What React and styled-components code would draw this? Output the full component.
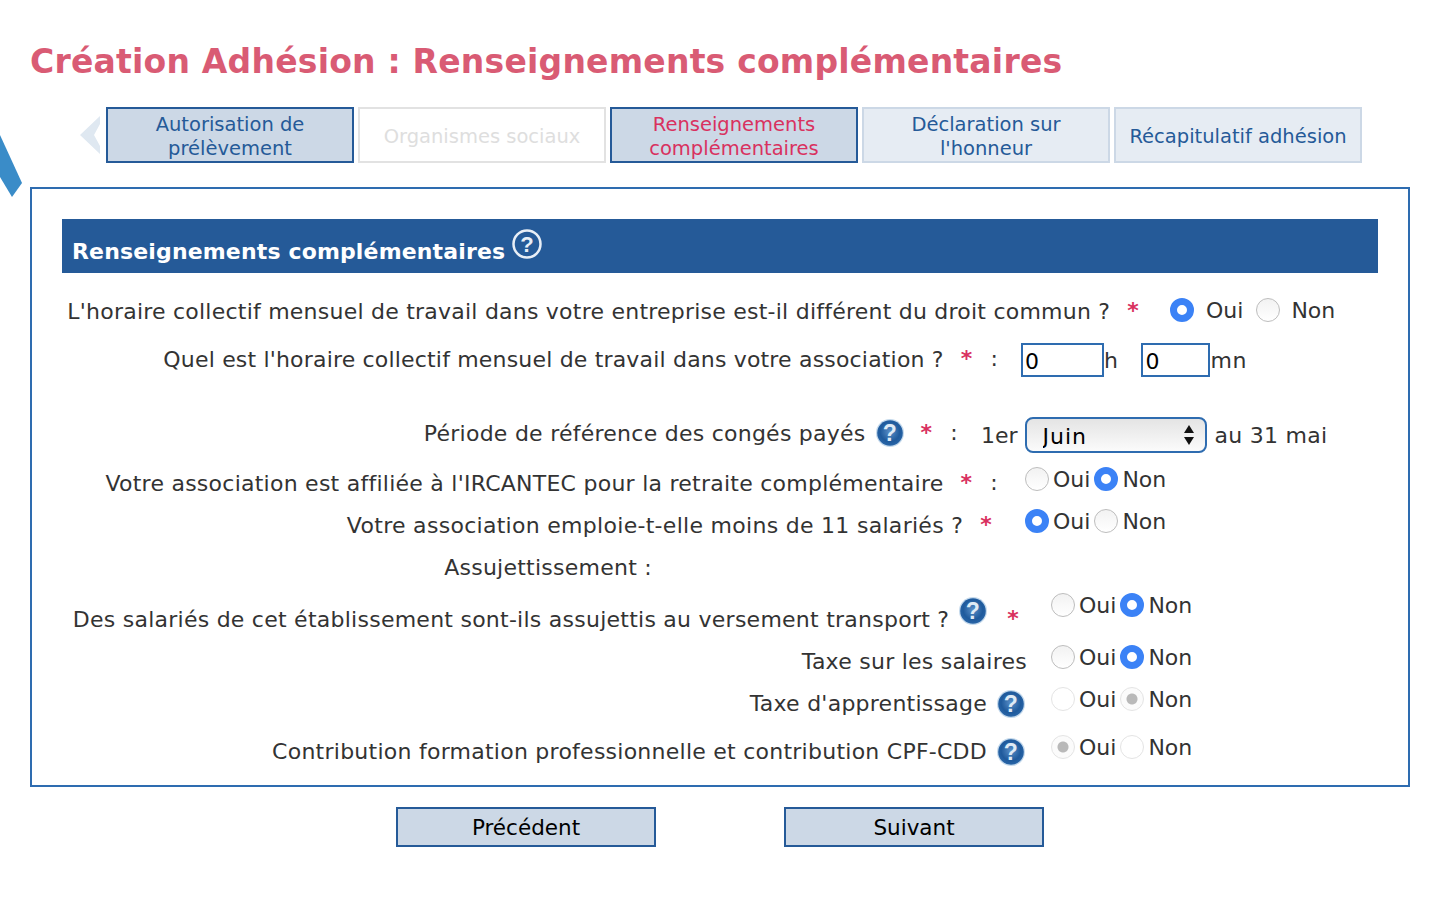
import React from "react";
import styled, { createGlobalStyle } from "styled-components";

const GlobalStyle = createGlobalStyle`
  html, body {
    margin: 0;
    background: #fff;
    color: #333;
    font-family: "DejaVu Sans", Verdana, sans-serif;
  }
`;

const Page = styled.div`
  position: relative;
  width: 1430px;
  height: 898px;
  padding: 42px 20px 0 30px;
  box-sizing: border-box;
  overflow: hidden;
`;

const Title = styled.h1`
  margin: 0;
  height: 40px;
  font-size: 33px;
  line-height: 40px;
  letter-spacing: 0.22px;
  font-weight: bold;
  color: #d95b74;
`;

const Ribbon = styled.svg`
  position: absolute;
  left: 0;
  top: 130px;
`;

const Steps = styled.nav`
  display: flex;
  align-items: center;
  gap: 4px;
  margin: 25px 0 24px 50px;
`;

const BackArrow = styled.svg`
  margin-right: 1px;
`;

const Step = styled.a`
  display: flex;
  align-items: center;
  justify-content: center;
  box-sizing: border-box;
  width: 248px;
  height: 56px;
  padding-top: 3px;
  border: 2px solid ${(p) => (p.$active ? "#255a98" : p.$disabled ? "#e2e2e2" : "#ccd8e6")};
  background: ${(p) => (p.$active ? "#ccd8e6" : p.$disabled ? "#fff" : "#e6ecf3")};
  color: ${(p) => (p.$current ? "#d9315f" : p.$disabled ? "#dedede" : "#255a98")};
  font-size: 19.5px;
  line-height: 24px;
  text-align: center;
`;

const Panel = styled.section`
  box-sizing: border-box;
  width: 1380px;
  height: 600px;
  border: 2px solid #2e6cb0;
  padding: 30px 30px 0;
`;

const SectionHeader = styled.h2`
  display: flex;
  align-items: flex-start;
  gap: 7px;
  box-sizing: border-box;
  height: 54px;
  margin: 0 0 16px;
  padding: 10px 0 0 10px;
  background: #255a98;
  color: #fff;
  font-size: 22px;
  line-height: 46px;
  letter-spacing: 0.15px;
  font-weight: bold;
`;

const Row = styled.div`
  display: grid;
  grid-template-columns: ${(p) => p.$labelEnd - 62}px auto;
  column-gap: ${(p) => p.$gap}px;
  align-items: center;
  height: 42px;
  margin-top: ${(p) => p.$top || 0}px;
  font-size: 22px;
`;

const Question = styled.div`
  display: flex;
  align-items: center;
  justify-content: flex-end;
  white-space: nowrap;
  letter-spacing: ${(p) => p.$spacing ?? 0.25}px;
  transform: translateY(${(p) => p.$shift ?? 1}px);
`;

const Star = styled.span`
  margin-left: ${(p) => p.$left || 17}px;
  color: #d9315f;
  font-weight: bold;
  transform: translateY(-1px);
`;

const Colon = styled.span`
  margin-left: 18px;
  transform: translateY(-1px);
`;

const Controls = styled.div`
  display: flex;
  align-items: center;
  white-space: nowrap;
  transform: translateY(${(p) => p.$shift || 0}px);
`;

const Radio = styled.input.attrs({ type: "radio" })`
  appearance: none;
  box-sizing: border-box;
  flex: none;
  width: 24px;
  height: 24px;
  margin: 0 ${(p) => p.$after || 4}px 0 0;
  border-radius: 50%;
  border: 1px solid #bdbdbd;
  background: linear-gradient(#f2f2f2, #fff);

  &:checked {
    border: 7px solid #3b82f6;
    background: #fff;
  }

  &:disabled {
    border: 1px solid #e4e4e4;
    background: #fff;
  }

  &:disabled:checked {
    border: 1px solid #e4e4e4;
    background: radial-gradient(circle, #b9b9b9 0 5px, #fbfbfb 6px);
  }
`;

const Choice = styled.span`
  margin-right: ${(p) => p.$after || 4}px;
  line-height: 24px;
  transform: translateY(1px);
`;

const TimeInput = styled.input`
  box-sizing: border-box;
  width: ${(p) => p.$width}px;
  height: 34px;
  padding: 2px 0 0 2px;
  border: 2px solid #2e6cb0;
  border-radius: 0;
  outline: none;
  color: #000;
  font: inherit;
`;

const Unit = styled.span`
  margin-right: ${(p) => p.$after || 0}px;
  letter-spacing: 0.5px;
`;

const SelectBox = styled.span`
  position: relative;
  display: inline-flex;
  margin: 0 8px 0 7px;
`;

const Select = styled.select`
  appearance: none;
  box-sizing: border-box;
  width: 182px;
  height: 36px;
  padding: 2px 0 0 16px;
  border: 2px solid #2e6cb0;
  border-radius: 8px;
  outline: none;
  background: linear-gradient(#e4e4e4, #fbfbfb);
  color: #000;
  font: inherit;
  letter-spacing: 1px;
`;

const SelectArrows = styled.svg`
  position: absolute;
  right: 12px;
  top: 6px;
  pointer-events: none;
`;

const Period = styled.span`
  letter-spacing: 0.25px;
`;

const Footer = styled.div`
  display: flex;
  gap: 128px;
  margin: 20px 0 0 366px;
`;

const NavButton = styled.button`
  box-sizing: border-box;
  width: 260px;
  height: 40px;
  border: 2px solid #255a98;
  background: #ccd8e6;
  color: #000;
  font: 21.5px "DejaVu Sans", Verdana, sans-serif;
`;

const HelpSvg = styled.svg`
  flex: none;
  margin-left: 10px;
  transform: translateY(${(p) => p.$shift || 0}px);
`;

const HelpOutline = styled.svg`
  flex: none;
`;

const Help = ({ shift, id }) => (
  <HelpSvg $shift={shift} width="28" height="28" viewBox="0 0 28 28" aria-label="Aide">
    <defs>
      <radialGradient id={id} cx="50%" cy="45%" r="55%">
        <stop offset="0%" stopColor="#5a8fc8" />
        <stop offset="70%" stopColor="#1f5a9c" />
        <stop offset="100%" stopColor="#2a66a8" />
      </radialGradient>
    </defs>
    <circle cx="14" cy="14" r="14" fill="#c4d9ec" />
    <circle cx="14" cy="14" r="12.8" fill={`url(#${id})`} />
    <text x="14" y="22" textAnchor="middle" fontSize="23" fontWeight="bold" fill="#dfeaf5" fontFamily="Liberation Sans, sans-serif">?</text>
  </HelpSvg>
);

const YesNo = ({ name, value, disabled }) => (
  <>
    <Radio name={name} defaultChecked={value === "oui"} disabled={disabled} />
    <Choice>Oui</Choice>
    <Radio name={name} defaultChecked={value === "non"} disabled={disabled} />
    <Choice>Non</Choice>
  </>
);

const App = () => (
  <Page>
    <GlobalStyle />
    <Ribbon width="24" height="70" viewBox="0 0 24 70" aria-hidden="true">
      <polygon points="0,5 22,53 12,67 0,47" fill="#3a8cc8" />
    </Ribbon>
    <Title>Création Adhésion : Renseignements complémentaires</Title>

    <Steps>
      <BackArrow width="21" height="40" viewBox="0 0 21 40" aria-hidden="true">
        <polygon points="0,20 20,1 20,9 14,20 20,31 20,39" fill="#dfe8f1" />
      </BackArrow>
      <Step $active>Autorisation de<br />prélèvement</Step>
      <Step $disabled>Organismes sociaux</Step>
      <Step $active $current>Renseignements<br />complémentaires</Step>
      <Step>Déclaration sur<br />l'honneur</Step>
      <Step>Récapitulatif adhésion</Step>
    </Steps>

    <Panel>
      <SectionHeader>
        Renseignements complémentaires
        <HelpOutline width="30" height="30" viewBox="0 0 30 30" aria-label="Aide">
          <circle cx="15" cy="15" r="13.5" fill="none" stroke="#e8eef6" strokeWidth="2.5" />
          <text x="15" y="23" textAnchor="middle" fontSize="22" fill="#e8eef6" fontFamily="Liberation Sans, sans-serif">?</text>
        </HelpOutline>
      </SectionHeader>

      <Row $labelEnd={1139} $gap={31}>
        <Question $spacing={0.23}>
          L'horaire collectif mensuel de travail dans votre entreprise est-il différent du droit commun ?
          <Star>*</Star>
        </Question>
        <Controls>
          <Radio name="horaire" defaultChecked $after={12} />
          <Choice $after={13}>Oui</Choice>
          <Radio name="horaire" $after={11} />
          <Choice>Non</Choice>
        </Controls>
      </Row>

      <Row $labelEnd={998} $gap={23} $top={8}>
        <Question $shift={-1} $spacing={0.18}>
          Quel est l'horaire collectif mensuel de travail dans votre association ?
          <Star>*</Star>
          <Colon>:</Colon>
        </Question>
        <Controls>
          <TimeInput defaultValue="0" $width={83} />
          <Unit $after={23}>h</Unit>
          <TimeInput defaultValue="0" $width={69} />
          <Unit>mn</Unit>
        </Controls>
      </Row>

      <Row $labelEnd={958} $gap={23} $top={32}>
        <Question $shift={-1}>
          Période de référence des congés payés
          <Help id="help-conges" />
          <Star>*</Star>
          <Colon>:</Colon>
        </Question>
        <Controls $shift={1}>
          1er
          <SelectBox>
            <Select defaultValue="juin">
              <option value="juin">Juin</option>
            </Select>
            <SelectArrows width="12" height="24" viewBox="0 0 12 24" aria-hidden="true">
              <path d="M6 2 L11 10 H1 Z M6 22 L1 14 H11 Z" fill="#111" />
            </SelectArrows>
          </SelectBox>
          <Period>au 31 mai</Period>
        </Controls>
      </Row>

      <Row $labelEnd={998} $gap={27} $top={6}>
        <Question>
          Votre association est affiliée à l'IRCANTEC pour la retraite complémentaire
          <Star>*</Star>
          <Colon>:</Colon>
        </Question>
        <Controls $shift={-3}>
          <YesNo name="ircantec" value="non" />
        </Controls>
      </Row>

      <Row $labelEnd={992} $gap={33}>
        <Question $spacing={0.29}>
          Votre association emploie-t-elle moins de 11 salariés ?
          <Star>*</Star>
        </Question>
        <Controls $shift={-3}>
          <YesNo name="salaries" value="oui" />
        </Controls>
      </Row>

      <Row $labelEnd={652} $gap={0}>
        <Question>Assujettissement :</Question>
        <span />
      </Row>

      <Row $labelEnd={1019} $gap={32} $top={10}>
        <Question>
          Des salariés de cet établissement sont-ils assujettis au versement transport ?
          <Help id="help-transport" shift={-8} />
          <Star $left={20}>*</Star>
        </Question>
        <Controls $shift={-13}>
          <YesNo name="transport" value="non" />
        </Controls>
      </Row>

      <Row $labelEnd={1027} $gap={24}>
        <Question>Taxe sur les salaires</Question>
        <Controls $shift={-3}>
          <YesNo name="taxe" value="non" />
        </Controls>
      </Row>

      <Row $labelEnd={1025} $gap={26}>
        <Question>
          Taxe d'apprentissage
          <Help id="help-apprentissage" shift={1} />
        </Question>
        <Controls $shift={-3}>
          <YesNo name="apprentissage" value="non" disabled />
        </Controls>
      </Row>

      <Row $labelEnd={1025} $gap={26} $top={6}>
        <Question>
          Contribution formation professionnelle et contribution CPF-CDD
          <Help id="help-cpf" shift={1} />
        </Question>
        <Controls $shift={-3}>
          <YesNo name="cpf" value="oui" disabled />
        </Controls>
      </Row>
    </Panel>

    <Footer>
      <NavButton>Précédent</NavButton>
      <NavButton>Suivant</NavButton>
    </Footer>
  </Page>
);

export default App;
